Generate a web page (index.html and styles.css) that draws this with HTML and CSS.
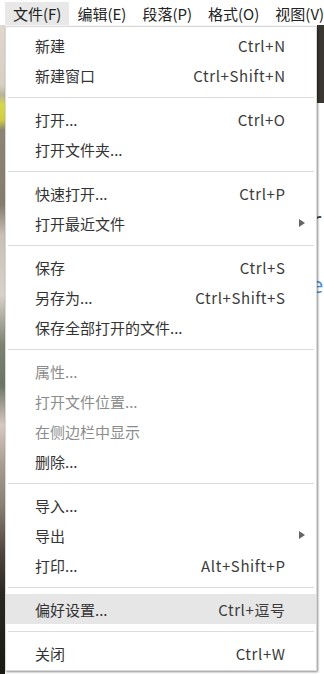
FILE: index.html
```html
<!DOCTYPE html>
<html lang="zh-CN">
<head>
    <meta charset="UTF-8">
    <meta name="viewport" content="width=device-width, initial-scale=1.0">
    <title>文件菜单</title>
    <link rel="stylesheet" href="styles.css">
</head>
<body>
    <div class="menubar">
        <div class="menubar-item active">文件(F)</div>
        <div class="menubar-item">编辑(E)</div>
        <div class="menubar-item">段落(P)</div>
        <div class="menubar-item">格式(O)</div>
        <div class="menubar-item">视图(V)</div>
    </div>

    <div class="workspace">
        <div class="photo-strip"></div>

        <div class="menu">
            <div class="menu-item"><span class="label">新建</span><span class="shortcut">Ctrl+N</span><span class="arrow-col"></span></div>
            <div class="menu-item"><span class="label">新建窗口</span><span class="shortcut">Ctrl+Shift+N</span><span class="arrow-col"></span></div>
            <div class="separator"></div>
            <div class="menu-item"><span class="label">打开...</span><span class="shortcut">Ctrl+O</span><span class="arrow-col"></span></div>
            <div class="menu-item"><span class="label">打开文件夹...</span><span class="shortcut"></span><span class="arrow-col"></span></div>
            <div class="separator"></div>
            <div class="menu-item"><span class="label">快速打开...</span><span class="shortcut">Ctrl+P</span><span class="arrow-col"></span></div>
            <div class="menu-item"><span class="label">打开最近文件</span><span class="shortcut"></span><span class="arrow-col"><span class="arrow"></span></span></div>
            <div class="separator"></div>
            <div class="menu-item"><span class="label">保存</span><span class="shortcut">Ctrl+S</span><span class="arrow-col"></span></div>
            <div class="menu-item"><span class="label">另存为...</span><span class="shortcut">Ctrl+Shift+S</span><span class="arrow-col"></span></div>
            <div class="menu-item"><span class="label">保存全部打开的文件...</span><span class="shortcut"></span><span class="arrow-col"></span></div>
            <div class="separator"></div>
            <div class="menu-item disabled"><span class="label">属性...</span><span class="shortcut"></span><span class="arrow-col"></span></div>
            <div class="menu-item disabled"><span class="label">打开文件位置...</span><span class="shortcut"></span><span class="arrow-col"></span></div>
            <div class="menu-item disabled"><span class="label">在侧边栏中显示</span><span class="shortcut"></span><span class="arrow-col"></span></div>
            <div class="menu-item"><span class="label">删除...</span><span class="shortcut"></span><span class="arrow-col"></span></div>
            <div class="separator"></div>
            <div class="menu-item"><span class="label">导入...</span><span class="shortcut"></span><span class="arrow-col"></span></div>
            <div class="menu-item"><span class="label">导出</span><span class="shortcut"></span><span class="arrow-col"><span class="arrow"></span></span></div>
            <div class="menu-item"><span class="label">打印...</span><span class="shortcut">Alt+Shift+P</span><span class="arrow-col"></span></div>
            <div class="separator"></div>
            <div class="menu-item hover"><span class="label">偏好设置...</span><span class="shortcut">Ctrl+逗号</span><span class="arrow-col"></span></div>
            <div class="separator"></div>
            <div class="menu-item"><span class="label">关闭</span><span class="shortcut">Ctrl+W</span><span class="arrow-col"></span></div>
        </div>

        <div class="editor-edge">
            <div class="dark-block"></div>
            <div class="peek peek-r">r</div>
            <div class="peek peek-e">e</div>
        </div>
    </div>
</body>
</html>
```

FILE: styles.css
```css
* {
    margin: 0;
    padding: 0;
    box-sizing: border-box;
}

html, body {
    width: 324px;
    height: 674px;
    overflow: hidden;
}

body {
    font-family: "Noto Sans CJK SC", "Noto Sans", sans-serif;
    font-size: 15px;
    color: #333;
    background: #fff;
}

.menubar {
    display: flex;
    height: 25px;
    padding: 2px 0 0 5px;
    background: #fff;
}

.menubar-item {
    padding: 0 8px;
    height: 23px;
    line-height: 23px;
    color: #222;
    white-space: nowrap;
}

.menubar-item.active {
    background: #e8e8e8;
}

.workspace {
    display: flex;
    height: 649px;
}

.photo-strip {
    width: 5px;
    flex: none;
    background: linear-gradient(180deg,
        #e0d8cc 0px, #d6cfc2 60px, #b8b49a 70px, #d8d84a 80px, #d0cc40 95px,
        #8c8474 105px, #857c6c 180px, #c8c0b4 210px, #d8d2c8 270px,
        #7c8270 320px, #6c7464 360px, #d8c8c0 400px, #a89c90 440px,
        #8a8074 480px, #4c443a 530px, #2a2822 570px, #1a1a14 649px);
}

.menu {
    width: 312px;
    flex: none;
    margin-top: 1px;
    height: 645px;
    padding: 3px 0 4px;
    background: #fff;
    border: 1px solid #d8d8d8;
    box-shadow: 1px 1px 2px rgba(0, 0, 0, 0.45);
    position: relative;
    z-index: 1;
}

.menu-item {
    display: flex;
    align-items: center;
    height: 30px;
    padding: 0 11px 0 29px;
    white-space: nowrap;
}

.menu-item.hover {
    background: #e6e6e6;
}

.menu-item.disabled {
    color: #8c8c8c;
}

.label {
    flex: 1;
}

.shortcut {
    letter-spacing: 0.6px;
    margin-right: -0.6px;
    color: #3c3c3c;
}

.arrow-col {
    width: 20px;
    display: flex;
    justify-content: flex-end;
}

.arrow {
    width: 0;
    height: 0;
    border-top: 4.5px solid transparent;
    border-bottom: 4.5px solid transparent;
    border-left: 6px solid #666;
}

.separator {
    height: 14px;
    margin: 0 2px;
    display: flex;
    align-items: center;
}

.separator::before {
    content: "";
    flex: 1;
    height: 1px;
    background: #dcdcdc;
}

.editor-edge {
    flex: 1;
    background: #fff;
    overflow: hidden;
}

.dark-block {
    height: 78px;
    background: #3a3632;
}

.peek {
    line-height: 1;
    margin-left: -6px;
    font-family: "Open Sans", sans-serif;
}

.peek-r {
    margin-top: 104px;
    font-size: 26px;
    color: #444;
}

.peek-e {
    margin-top: 40px;
    font-size: 22px;
    color: #4a90d9;
}
```
